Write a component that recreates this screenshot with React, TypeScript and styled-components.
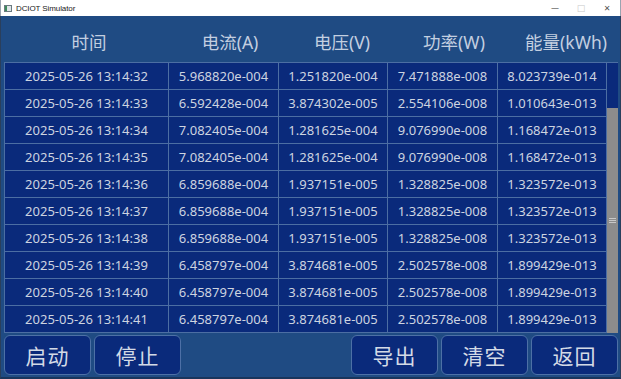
import { createGlobalStyle, styled } from 'styled-components';

const GlobalStyle = createGlobalStyle`
  html, body {
    margin: 0;
    padding: 0;
    background: #ffffff;
  }
  * {
    box-sizing: border-box;
  }
`;

const FONT = `"Noto Sans", "Noto Sans CJK SC", sans-serif`;
const CELL_BG = '#0a2a7b';
const LINE = '#4c6ea3';

const rows = [
  ['2025-05-26 13:14:32', '5.968820e-004', '1.251820e-004', '7.471888e-008', '8.023739e-014'],
  ['2025-05-26 13:14:33', '6.592428e-004', '3.874302e-005', '2.554106e-008', '1.010643e-013'],
  ['2025-05-26 13:14:34', '7.082405e-004', '1.281625e-004', '9.076990e-008', '1.168472e-013'],
  ['2025-05-26 13:14:35', '7.082405e-004', '1.281625e-004', '9.076990e-008', '1.168472e-013'],
  ['2025-05-26 13:14:36', '6.859688e-004', '1.937151e-005', '1.328825e-008', '1.323572e-013'],
  ['2025-05-26 13:14:37', '6.859688e-004', '1.937151e-005', '1.328825e-008', '1.323572e-013'],
  ['2025-05-26 13:14:38', '6.859688e-004', '1.937151e-005', '1.328825e-008', '1.323572e-013'],
  ['2025-05-26 13:14:39', '6.458797e-004', '3.874681e-005', '2.502578e-008', '1.899429e-013'],
  ['2025-05-26 13:14:40', '6.458797e-004', '3.874681e-005', '2.502578e-008', '1.899429e-013'],
  ['2025-05-26 13:14:41', '6.458797e-004', '3.874681e-005', '2.502578e-008', '1.899429e-013'],
];

const headers = ['时间', '电流(A)', '电压(V)', '功率(W)', '能量(kWh)'];

function App() {
  return (
    <>
      <GlobalStyle />
      <Window>
        <TitleBar>
          <AppIcon />
          <TitleText>DCIOT Simulator</TitleText>
          <WindowControls>
            <Control>—</Control>
            <Control $dim>□</Control>
            <Control>✕</Control>
          </WindowControls>
        </TitleBar>
        <Client>
          <HeaderRow>
            {headers.map((h) => (
              <HeaderCell key={h}>{h}</HeaderCell>
            ))}
          </HeaderRow>
          <TableArea>
            <Table>
              {rows.map((r) => (
                <Row key={r[0]}>
                  {r.map((c, i) => (
                    <Cell key={i}>{c}</Cell>
                  ))}
                </Row>
              ))}
            </Table>
            <ScrollBar>
              <Handle>
                <Grip />
              </Handle>
            </ScrollBar>
          </TableArea>
          <ButtonBar>
            <ActionButton>启动</ActionButton>
            <ActionButton>停止</ActionButton>
            <Spacer />
            <ActionButton>导出</ActionButton>
            <ActionButton>清空</ActionButton>
            <ActionButton>返回</ActionButton>
          </ButtonBar>
        </Client>
      </Window>
    </>
  );
}

const Window = styled.div`
  width: 621px;
  height: 379px;
  display: flex;
  flex-direction: column;
  overflow: hidden;
  font-family: ${FONT};
`;

const TitleBar = styled.div`
  height: 16px;
  display: flex;
  align-items: center;
  background: #ffffff;
  padding-left: 3px;
  border-left: 1px solid #9aa4b0;
  border-right: 1px solid #9aa4b0;
`;

const AppIcon = styled.span`
  width: 8px;
  height: 7px;
  border: 1px solid #6b7a80;
  background: linear-gradient(90deg, #3d8a5c 0 40%, #dfe6e8 40%);
  margin-right: 4px;
`;

const TitleText = styled.span`
  font-family: "Liberation Sans", sans-serif;
  font-size: 8px;
  letter-spacing: -0.1px;
  color: #1a1a1a;
`;

const WindowControls = styled.div`
  margin-left: auto;
  display: flex;
  height: 100%;
`;

const Control = styled.span<{ $dim?: boolean }>`
  width: 26px;
  display: flex;
  align-items: center;
  justify-content: center;
  font-size: ${(p) => (p.$dim ? '9px' : '8px')};
  color: ${(p) => (p.$dim ? '#c8c8c8' : '#555')};
  font-family: "DejaVu Sans", sans-serif;
`;

const Client = styled.div`
  flex: 1;
  display: flex;
  flex-direction: column;
  background: #1f4b83;
  padding: 0 2px 0 3px;
  border-left: 1px solid #2a3f5c;
  border-right: 1px solid #2a3f5c;
  border-bottom: 2px solid #19355c;
`;

const HeaderRow = styled.div`
  height: 46px;
  display: grid;
  grid-template-columns: 170px repeat(4, 112px);
  align-items: center;
  padding-top: 5px;
`;

const HeaderCell = styled.div`
  text-align: center;
  font-size: 17.5px;
  color: #c3cfe0;
  white-space: nowrap;
`;

const TableArea = styled.div`
  display: flex;
  height: 271px;
`;

const Table = styled.div`
  width: 603px;
  border-top: 1px solid ${LINE};
  border-left: 1px solid ${LINE};
  background: ${CELL_BG};
`;

const Row = styled.div`
  display: grid;
  grid-template-columns: 164px 110px 109px 110px 109px;
  height: 27px;
`;

const Cell = styled.div`
  display: flex;
  align-items: center;
  justify-content: center;
  border-right: 1px solid ${LINE};
  border-bottom: 1px solid ${LINE};
  font-size: 13px;
  color: #cdd4e0;
  white-space: nowrap;
`;

const ScrollBar = styled.div`
  width: 13px;
  background: ${CELL_BG};
  display: flex;
  flex-direction: column;
  justify-content: flex-end;
  border-top: 1px solid ${LINE};
`;

const Handle = styled.div`
  height: 225px;
  background: #8c8c8c;
  display: flex;
  align-items: center;
  justify-content: center;
`;

const Grip = styled.span`
  width: 7px;
  height: 5px;
  border-top: 1px solid #c8c8c8;
  border-bottom: 1px solid #c8c8c8;
  position: relative;
  &::after {
    content: '';
    position: absolute;
    left: 0;
    right: 0;
    top: 1px;
    border-top: 1px solid #c8c8c8;
  }
`;

const ButtonBar = styled.div`
  display: flex;
  gap: 3px;
  padding-top: 2px;
  height: 43px;
`;

const Spacer = styled.div`
  flex: 1;
`;

const ActionButton = styled.button`
  width: 87px;
  height: 40px;
  background: ${CELL_BG};
  border: 1.5px solid #4d70a6;
  border-radius: 6px;
  color: #d3dae6;
  font-family: "Noto Sans CJK SC", sans-serif;
  font-size: 21px;
  letter-spacing: 1px;
  padding: 0;
  cursor: pointer;
`;

export default App;
